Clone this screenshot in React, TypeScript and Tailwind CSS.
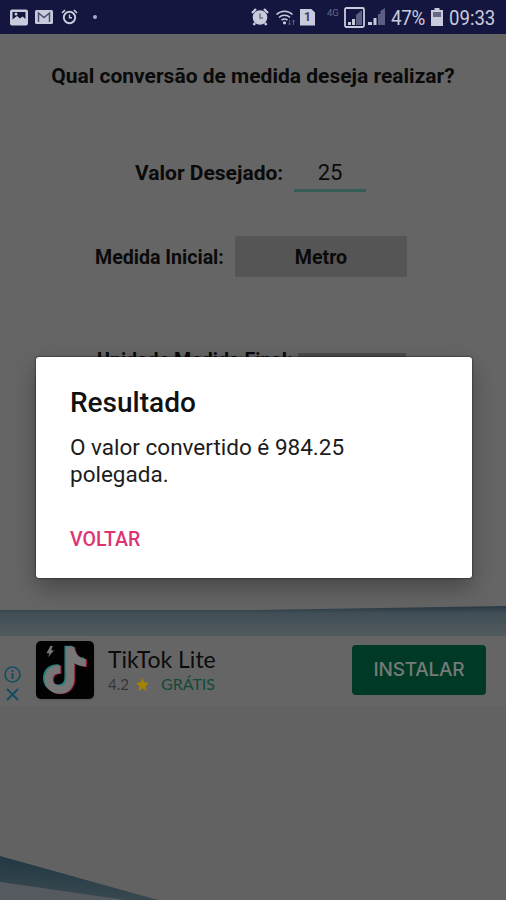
const StatusBar = () => {
  return (
    <header className="flex h-[34px] w-full items-center bg-[#141640] text-[#c9cbdc]">
      {/* Notifications */}
      <svg className="ml-[10px] h-[17px] w-[18px]" viewBox="0 0 18 17" fill="none">
        <rect x="0" y="0.5" width="18" height="16" rx="2" fill="#c9cbdc" />
        <path d="M2.500 3H15.500V10L12.500 7.500L10 9.500L7 7L2.500 10.500Z" fill="#141640" />
        <circle cx="6" cy="5" r="1.500" fill="#c9cbdc" />
      </svg>
      <svg className="ml-[7px] h-[14px] w-[18px]" viewBox="0 0 18 14" fill="none">
        <rect width="18" height="14" rx="1.500" fill="#c9cbdc" />
        <path d="M3.500 12V3L9 7.500L14.500 3V12" stroke="#4a4c70" strokeWidth="1.500" />
      </svg>
      <svg className="ml-[8px] h-[16px] w-[17px]" viewBox="0 0 17 16" fill="none" stroke="#c9cbdc">
        <circle cx="8.500" cy="8.500" r="5.700" strokeWidth="1.900" />
        <path d="M8.500 5.500V8.700H11" strokeWidth="1.400" />
        <path d="M1 4L4 1M16 4L13 1" strokeWidth="1.700" />
      </svg>
      <span className="ml-[15px] size-[4px] rounded-full bg-[#a9abc0]" />

      {/* System indicators */}
      <svg className="ml-[154px] h-[18px] w-[18px] shrink-0" viewBox="0 0 18 18" fill="none">
        <path d="M1 5L5 1M17 5L13 1M4 15L2.500 17M14 15L15.500 17" stroke="#c9cbdc" strokeWidth="2.400" />
        <circle cx="9" cy="9.500" r="7.300" fill="#c9cbdc" />
        <path d="M9 5.500V10H12" stroke="#6f7190" strokeWidth="1.500" />
      </svg>
      <svg className="ml-[6px] h-[17px] w-[21px] shrink-0" viewBox="0 0 20 17" fill="none">
        <path d="M1 5.500C5.500 1 12.500 1 17 5.500" stroke="#c9cbdc" strokeWidth="1.500" />
        <path d="M3.500 8.500C6.500 5.500 11.500 5.500 14.500 8.500" stroke="#c9cbdc" strokeWidth="1.500" />
        <path d="M6 11.200C7.700 9.500 10.300 9.500 12 11.200" stroke="#c9cbdc" strokeWidth="1.500" />
        <circle cx="9" cy="13.800" r="1.600" fill="#c9cbdc" />
        <path d="M14 16V11M12.800 14.500L14 16L15.200 14.500M18 11V16M16.800 12.500L18 11L19.200 12.500" stroke="#5b5d80" />
      </svg>
      <div className="ml-[4px] flex h-[17px] w-[15px] shrink-0 items-center justify-center bg-[#c9cbdc] font-bold text-[12px] leading-none text-[#3b3c5c] [clip-path:polygon(0_0,72%_0,100%_24%,100%_100%,0_100%)]">
        1
      </div>
      <span className="mb-[9px] ml-[12px] w-[14px] shrink-0 text-[9.5px] leading-none text-[#666887]">4G</span>
      <svg className="ml-[3px] h-[21px] w-[21px] shrink-0" viewBox="0 0 21 21" fill="none">
        <rect x="1" y="1" width="19" height="19" rx="1.500" stroke="#c9cbdc" strokeWidth="1.800" />
        <path d="M4 18V15H7V18ZM8 18V12H11V18Z" fill="#c9cbdc" />
        <path d="M12 18V8L14.500 6V18ZM14.500 18V6L18 3V18Z" fill="#5d5f82" />
      </svg>
      <svg className="ml-[3px] h-[18px] w-[18px] shrink-0" viewBox="0 0 18 18">
        <path d="M0 17V14H4V17ZM5.500 17V10H8.500V17Z" fill="#c9cbdc" />
        <path d="M10 17V6H12.500V17ZM12.500 17V3L17 0V17Z" fill="#5d5f82" />
      </svg>
      <span className="ml-[5px] w-[35px] shrink-0 whitespace-nowrap pt-[2px] text-[20px] tracking-[-0.3px]">
        <span className="inline-block origin-left scale-x-[0.94]">47%</span>
      </span>
      <svg className="ml-[5px] h-[18px] w-[12px] shrink-0" viewBox="0 0 12 18">
        <path d="M3.500 0H8.500V2H12V18H0V2H3.500Z" fill="#c9cbdc" />
        <rect x="2" y="4" width="8" height="5" fill="#66688a" />
      </svg>
      <span className="ml-[6px] shrink-0 whitespace-nowrap pt-[2px] text-[20px]">
        <span className="inline-block origin-left scale-x-[0.93]">09:33</span>
      </span>
    </header>
  );
};

const TikTokLogo = () => {
  const note = 'M51 9H65C66 21 73 29 85 30V43C77 43 70 41 65 37V64C65 80 54 90 40 90C25 90 14 79 14 65C14 50 25 40 41 41V55C33 54 28 58 28 65C28 72 33 76 40 76C47 76 51 72 51 64Z';

  return (
    <svg className="mt-[-2px] h-[58px] w-[58px] shrink-0 rounded-[5px] bg-[#020202] shadow" viewBox="0 0 100 100">
      <path d={note} fill="#8f1a36" transform="translate(3 2)" />
      <path d={note} fill="#28807a" transform="translate(-2 -1)" />
      <path d={note} fill="#777777" transform="translate(1 1)" />
      <path d="M25 8L18 21H23L21 28L31 16H26L29 9Z" fill="#777777" />
    </svg>
  );
};

const AdBanner = () => {
  return (
    <aside className="flex h-[70px] w-full shrink-0 items-center bg-[#656565]">
      <div className="mt-[25px] flex w-[36px] flex-col items-center gap-[5px] pr-[11px]">
        <svg className="h-[17px] w-[17px]" viewBox="0 0 17 17" fill="none" stroke="#124d63">
          <circle cx="8.500" cy="8.500" r="7.500" strokeWidth="1.600" />
          <path d="M8.500 7V13M8.500 4V6" strokeWidth="2" />
        </svg>
        <svg className="h-[13px] w-[13px]" viewBox="0 0 13 13" stroke="#124d63" strokeWidth="1.900">
          <path d="M1 1L12 12M12 1L1 12" />
        </svg>
      </div>
      <TikTokLogo />
      <div className="ml-[14px] w-[244px]">
        <div className="text-[23px] leading-[26px] text-[#0b0b0b] font-['Lato',sans-serif]">TikTok Lite</div>
        <div className="flex h-[24px] items-center text-[16px] font-['Lato',sans-serif]">
          <span className="w-[22px] text-[15px] text-[#353535]">4.2</span>
          <svg className="ml-[6px] h-[13px] w-[13px]" viewBox="0 0 24 24" fill="#a58200">
            <path d="M12 0L15.500 8L24 9L17.500 15L19.500 24L12 19.500L4.500 24L6.500 15L0 9L8.500 8Z" />
          </svg>
          <span className="ml-[12px] text-[#12493a]">GRÁTIS</span>
        </div>
      </div>
      <button className="mt-[-2px] h-[50px] w-[134px] rounded-[4px] bg-[#003a27] text-[19px] font-medium tracking-[-0.2px] text-[#747b78] font-['Inter',sans-serif]">
        INSTALAR
      </button>
    </aside>
  );
};

const ResultDialog = () => {
  return (
    <div className="absolute left-[36px] top-[357px] h-[221px] w-[436px] rounded-[3px] bg-white px-[34px] pt-[29px] shadow-[0_10px_22px_rgba(0,0,0,0.3),0_0_2px_rgba(0,0,0,0.9)]">
      <h2 className="text-[28px] font-medium leading-[34px] text-[#111111]">Resultado</h2>
      <p className="mt-[14px] text-[22.5px] leading-[27px] text-[#1c1c1c]">
        O valor convertido é 984.25
        <br />
        polegada.
      </p>
      <button className="mt-[39px] block text-[19.5px] font-medium leading-[26px] text-[#dc3472]">VOLTAR</button>
    </div>
  );
};

const App = () => {
  return (
    <div className="relative flex h-[900px] w-[506px] flex-col overflow-hidden bg-[#656565] font-['Roboto',sans-serif]">
      <StatusBar />

      <main className="flex h-[571px] flex-col font-bold text-[19.6px] leading-[26px] text-[#0a0a0a]">
        <h1 className="mt-[29px] text-center text-[21px]">Qual conversão de medida deseja realizar?</h1>
        <div className="mt-[64px] flex h-[39px] items-center pl-[135px]">
          <label className="w-[159px] text-[21px]">Valor Desejado:</label>
          <div className="h-full w-[72px] border-b-[3px] border-[#365d55] pt-[7px] text-center text-[22px] font-normal">25</div>
        </div>
        <div className="mt-[44px] flex h-[41px] items-center pl-[95px]">
          <label className="w-[140px] pt-[2px]">Medida Inicial:</label>
          <div className="flex h-[41px] w-[172px] items-center justify-center rounded-[2px] bg-[#555555] pt-[2px]">Metro</div>
        </div>
        <div className="mt-[74px] flex items-start pl-[97px]">
          <label className="mt-[-3px] w-[201px] whitespace-nowrap">Unidade Medida Final:</label>
          <div className="mt-[2px] h-[41px] w-[108px] bg-[#4b4b4b]" />
        </div>
      </main>

      {/* Blue edge of the page artwork */}
      <svg className="h-[31px] w-[506px] shrink-0" viewBox="0 0 506 31" preserveAspectRatio="none">
        <defs>
          <linearGradient id="edge" x1="0" y1="0" x2="0" y2="1">
            <stop offset="0" stopColor="#293943" />
            <stop offset="0.25" stopColor="#414e55" />
            <stop offset="1" stopColor="#525b5d" />
          </linearGradient>
        </defs>
        <path d="M0 5L250 5L506 1V31H0Z" fill="url(#edge)" />
      </svg>
      <AdBanner />
      <div className="flex flex-1 items-end bg-[#626263]">
        <svg className="h-[44px] w-[160px]" viewBox="0 0 160 44">
          <defs>
            <linearGradient id="corner" x1="0.2" y1="0" x2="0" y2="1">
              <stop offset="0" stopColor="#203743" />
              <stop offset="1" stopColor="#3d4b51" />
            </linearGradient>
          </defs>
          <path d="M0 26L125 44H0Z" fill="#555a60" />
          <path d="M0 0L158 44H125L0 26Z" fill="url(#corner)" />
        </svg>
      </div>

      <ResultDialog />
    </div>
  );
};

export default App;
